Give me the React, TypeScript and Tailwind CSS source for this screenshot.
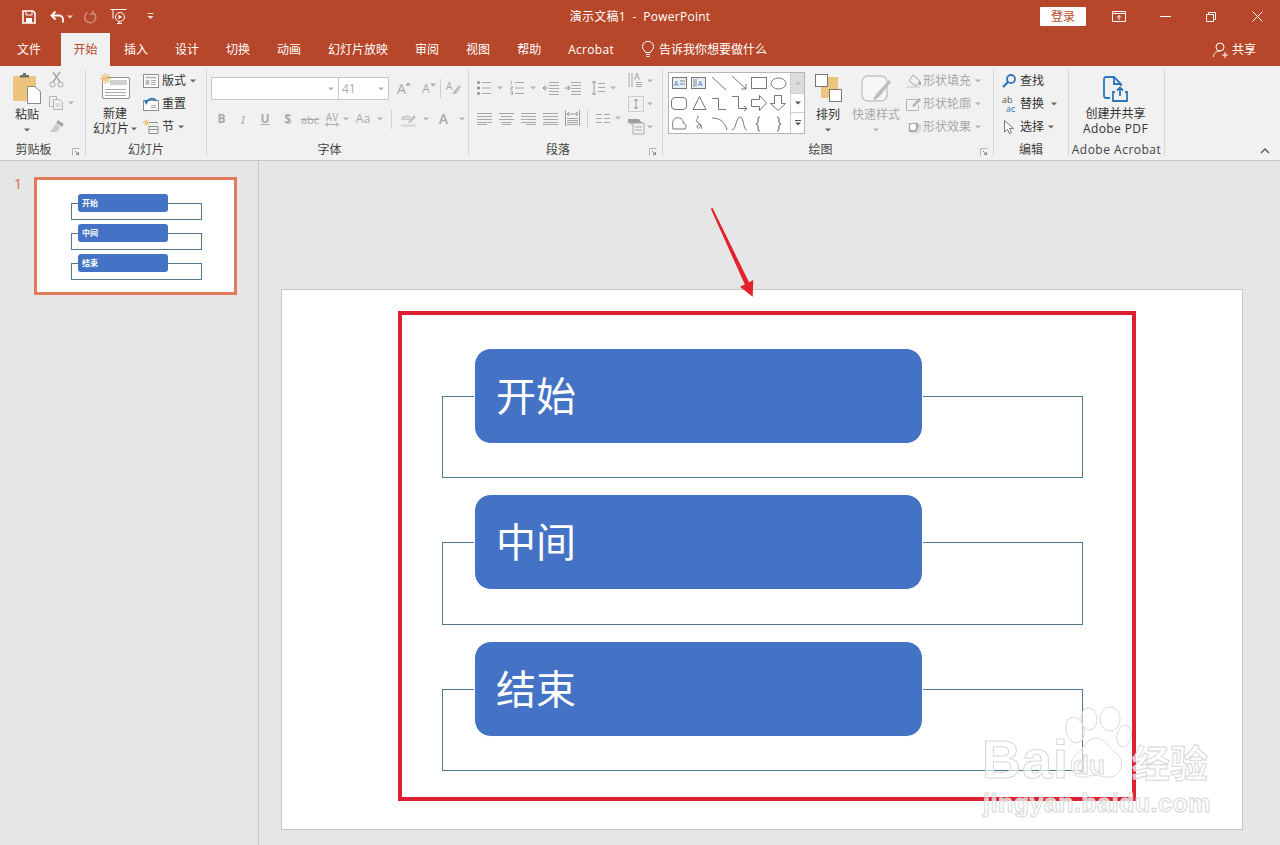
import React from "react";

const FONT = 'font-["Open_Sans","Noto_Sans_CJK_SC",sans-serif]';
const G = "#a9a9a9";

function Caret({ c = "#666", className = "" }: { c?: string; className?: string }) {
  return (
    <svg width="6" height="4" viewBox="0 0 6 4" className={`shrink-0 ${className}`}>
      <path d="M0 0.5h6L3 3.5z" fill={c} />
    </svg>
  );
}

function Ic({ w, h, children, className = "" }: { w: number; h: number; children: React.ReactNode; className?: string }) {
  return (
    <svg width={w} height={h} viewBox={`0 0 ${w} ${h}`} fill="none" className={`shrink-0 overflow-visible ${className}`}>
      {children}
    </svg>
  );
}

function Group({ w, label, launcher, children, labelClass = "" }: { w: number; label: string; launcher?: boolean; children: React.ReactNode; labelClass?: string }) {
  return (
    <div style={{ width: w }} className="relative mt-[4px] flex h-[86px] shrink-0 flex-col border-r border-[#d6d6d6]">
      <div className="h-[73px]">{children}</div>
      <div className={`flex h-[13px] items-center justify-center text-[12px] leading-none text-[#444] ${labelClass}`}>{label}</div>
      {launcher && (
        <svg width="8" height="8" viewBox="0 0 8 8" className="absolute bottom-[0px] right-[5px]">
          <path d="M0.5 7.5V0.5h7" stroke="#b5b5b5" fill="none" />
          <path d="M3 3l3.5 3.5M6.5 4v2.5H4" stroke="#888" fill="none" />
        </svg>
      )}
    </div>
  );
}

function Small({ icon, label, caret, disabled, gap = 4 }: { icon: React.ReactNode; label: string; caret?: boolean; disabled?: boolean; gap?: number }) {
  return (
    <div className="flex h-[23px] items-center">
      {icon}
      <span style={{ marginLeft: gap }} className={`whitespace-nowrap text-[12px] leading-none ${disabled ? "text-[#a8a8a8]" : "text-[#333]"}`}>{label}</span>
      {caret && <Caret c={disabled ? "#b5b5b5" : "#666"} className="ml-[4px]" />}
    </div>
  );
}

function Cell({ w = 22, children }: { w?: number; children: React.ReactNode }) {
  return <div style={{ width: w }} className="flex shrink-0 items-center justify-center">{children}</div>;
}

function Lines({ x = 1, w = 14, ys, c = G }: { x?: number; w?: number; ys: number[]; c?: string }) {
  return <path d={ys.map((y) => `M${x} ${y + 0.5}h${w}`).join("")} stroke={c} />;
}

function GreyLetter({ children, className = "" }: { children: React.ReactNode; className?: string }) {
  return <span className={`text-[12px] font-bold leading-none text-[#a9a9a9] ${className}`}>{children}</span>;
}

function TitleBar() {
  return (
    <div className="grid h-[33px] grid-cols-[1fr_auto_1fr] items-center text-white">
      <div className="flex items-center pl-[22px]">
        <Ic w={14} h={14}>
          <path d="M1 1h10l2 2v10H1z" stroke="#fff" strokeWidth="1.6" />
          <path d="M4 1.5v3.5h6V1.5" stroke="#fff" />
          <rect x="4" y="8" width="6" height="5" fill="#fff" />
        </Ic>
        <Ic w={15} h={14} className="ml-[14px]">
          <path d="M5.5 1.5L1.5 5.5l4 4" stroke="#fff" strokeWidth="1.8" />
          <path d="M2 5.5h7a4 4 0 0 1 4 4v3" stroke="#fff" strokeWidth="1.8" />
        </Ic>
        <Caret c="#f0d5cc" className="ml-[2px]" />
        <Ic w={14} h={14} className="ml-[10px]">
          <path d="M4.5 2.5A5.5 5.5 0 1 0 10 2.6M10 0.5v3.5H6.5" stroke="#cf8a73" strokeWidth="1.6" />
        </Ic>
        <Ic w={18} h={18} className="ml-[13px]">
          <path d="M0.5 1.5h16M3 1.5v9M7 15.5h5" stroke="#fff" strokeWidth="1" />
          <circle cx="10" cy="9" r="4.5" stroke="#fff" />
          <path d="M8.5 6.8v4.4L12.2 9z" fill="#fff" />
          <path d="M9 13.5v2" stroke="#fff" />
        </Ic>
        <svg width="7" height="7" viewBox="0 0 7 7" className="ml-[19px]">
          <path d="M0.5 0.5h6" stroke="#f3ddd5" />
          <path d="M0.5 3h6L3.5 6z" fill="#f3ddd5" />
        </svg>
      </div>
      <div className="whitespace-pre text-[12px] leading-none tracking-[0.25px]">演示文稿1  -  PowerPoint</div>
      <div className="flex items-center justify-end">
        <div className="mr-[10px] flex h-[19px] w-[46px] items-center justify-center rounded-[1px] bg-white text-[12px] leading-none text-[#b7472a]">登录</div>
        <Cell w={46}>
          <Ic w={14} h={12}>
            <path d="M0.5 0.5h13v10h-13zM0.5 2.5h13" stroke="#fff" />
            <path d="M7 9V4.5M5 6.5l2-2 2 2" stroke="#fff" />
          </Ic>
        </Cell>
        <Cell w={46}>
          <Ic w={11} h={3}><path d="M0 1.5h11" stroke="#fff" /></Ic>
        </Cell>
        <Cell w={46}>
          <Ic w={10} h={10}>
            <path d="M0.5 2.5h7v7h-7zM2.5 2.5v-2h7v7h-2" stroke="#fff" />
          </Ic>
        </Cell>
        <Cell w={46}>
          <Ic w={11} h={11}><path d="M0.5 0.5l10 10M10.5 0.5l-10 10" stroke="#fff" /></Ic>
        </Cell>
      </div>
    </div>
  );
}

function Tabs() {
  const tabs = ["插入", "设计", "切换", "动画", "幻灯片放映", "审阅", "视图", "帮助"];
  return (
    <div className="flex h-[33px] items-stretch pl-[5px] text-[12px] leading-none text-white">
      <div className="flex items-center px-[12px]">文件</div>
      <div className="ml-[8px] flex w-[49px] items-center justify-center bg-[#f1f1f1] text-[#b7472a]">开始</div>
      <div className="flex gap-[3px] pl-[2px]">
        {tabs.map((t) => (
          <div key={t} className="flex items-center px-[12px]">{t}</div>
        ))}
        <div className="ml-[12px] flex items-center tracking-[0.3px]">Acrobat</div>
      </div>
      <div className="ml-[27px] flex items-center">
        <Ic w={14} h={17}>
          <path d="M4.5 11.5C4 9.5 1.5 8.8 1.5 5.8a5.5 5.5 0 0 1 11 0c0 3-2.5 3.7-3 5.7zM5 13.5h4M5.5 15.5h3" stroke="#fff" />
        </Ic>
        <span className="ml-[4px]">告诉我你想要做什么</span>
      </div>
      <div className="ml-auto flex items-center pr-[24px]">
        <Ic w={15} h={16}>
          <circle cx="7" cy="5" r="4" stroke="#fff" />
          <path d="M0.5 15c0-3.5 2.5-6 6.5-6M9 13h6M12 10v6" stroke="#fff" />
        </Ic>
        <span className="ml-[4px]">共享</span>
      </div>
    </div>
  );
}

function Clipboard() {
  return (
    <Group w={86} label="剪贴板" launcher labelClass="pr-[18px]">
      <div className="flex pl-[13px] pt-[3px]">
        <div className="flex w-[28px] flex-col items-center">
          <Ic w={28} h={31}>
            <rect x="0" y="3" width="23" height="25" rx="1.5" fill="#ecc47e" />
            <path d="M7 4.5h9V2H13V0h-3v2H7z" fill="#6f6f6f" />
            <path d="M14.5 13.5h7l6 5v12h-13z" fill="#fff" stroke="#8a8a8a" />
          </Ic>
          <span className="mt-[4px] whitespace-nowrap text-[12px] leading-[14px] text-[#333]">粘贴</span>
          <Caret className="mt-[6px]" />
        </div>
        <div className="ml-[8px] flex flex-col">
          <Ic w={15} h={16} className="-mt-[1px]">
            <path d="M4 0l7 10M11 0L4 10" stroke="#a5a5a5" strokeWidth="1.4" />
            <circle cx="3.5" cy="12.5" r="2.5" stroke="#a5a5a5" />
            <circle cx="11.5" cy="12.5" r="2.5" stroke="#a5a5a5" />
          </Ic>
          <div className="mt-[8px] flex items-center">
            <Ic w={14} h={14}>
              <path d="M0.5 0.5h7v10h-7z" stroke="#b5b5b5" />
              <path d="M4.5 3.5h6l3 3v7h-9z" fill="#f1f1f1" stroke="#b5b5b5" />
              <path d="M6.5 8h5M6.5 10h5" stroke="#c5c5c5" />
            </Ic>
            <Caret c="#b5b5b5" className="ml-[5px]" />
          </div>
          <Ic w={16} h={14} className="mt-[9px]">
            <path d="M9 1l6 4-2 3-6-4z" fill="#a9a9a9" />
            <path d="M7 5l4 3-3 5-7 0z" fill="#c9c9c9" />
          </Ic>
        </div>
      </div>
    </Group>
  );
}

function Slides() {
  return (
    <Group w={121} label="幻灯片">
      <div className="flex">
        <div className="ml-[6px] flex w-[46px] flex-col items-center pt-[3px]">
          <Ic w={30} h={26}>
            <rect x="2.5" y="4.5" width="27" height="21" rx="1.5" fill="#fff" stroke="#8e8e8e" />
            <rect x="10" y="7" width="17" height="5" fill="#d0d0d0" />
            <path d="M5 16.5h21M5 19.5h21M5 22.5h21" stroke="#aaa" />
            <path d="M5.5 0v11M0 5.5h11M1.5 1.5l8 8M9.5 1.5l-8 8" stroke="#ecc47e" strokeWidth="1.5" />
          </Ic>
          <span className="mt-[7px] text-[12px] leading-[15px] text-[#333]">新建</span>
          <span className="flex items-center whitespace-nowrap text-[12px] leading-[15px] text-[#333]">幻灯片<Caret className="ml-[2px]" /></span>
        </div>
        <div className="ml-[5px] -mt-[1px] flex flex-col">
          <Small
            label="版式"
            caret
            gap={3}
            icon={
              <Ic w={16} h={14}>
                <rect x="0.5" y="0.5" width="15" height="13" fill="#fff" stroke="#8e8e8e" />
                <rect x="2.5" y="2.5" width="11" height="2" fill="#bdbdbd" />
                <rect x="2.5" y="6" width="4" height="5" fill="#bdbdbd" />
                <path d="M8 6.5h5M8 8.5h5M8 10.5h5" stroke="#aaa" />
              </Ic>
            }
          />
          <Small
            label="重置"
            gap={3}
            icon={
              <Ic w={16} h={14}>
                <rect x="0.5" y="3.5" width="15" height="10" fill="#fff" stroke="#8e8e8e" />
                <path d="M3 5.5c2-4 7-5 10-2" stroke="#2f78b9" strokeWidth="2" />
                <path d="M1 3l5 0-3 5z" fill="#2f78b9" />
                <path d="M8 8.5h5M8 10.5h5" stroke="#aaa" />
              </Ic>
            }
          />
          <Small
            label="节"
            caret
            gap={3}
            icon={
              <Ic w={16} h={15}>
                <path d="M3.5 0v7M0 3.5h7M1 1l5 5M6 1L1 6" stroke="#ecc47e" />
                <path d="M6 3.5h9M6 7.5h9v7H6zM6 10.5h9" stroke="#8e8e8e" />
              </Ic>
            }
          />
        </div>
      </div>
    </Group>
  );
}

function Font() {
  return (
    <Group w={262} label="字体" labelClass="pr-[16px]">
      <div className="pl-[4px] pt-[7px]">
        <div className="flex h-[23px] items-center">
          <div className="flex h-[23px] w-[128px] items-center justify-end border border-[#c6c6c6] bg-white pr-[4px]"><Caret c="#b5b5b5" /></div>
          <div className="flex h-[23px] w-[50px] items-center justify-between border border-l-0 border-[#c6c6c6] bg-white pl-[3px] pr-[4px]">
            <span className="text-[12px] leading-none text-[#a9a9a9]">41</span>
            <Caret c="#b5b5b5" />
          </div>
          <Cell w={25}>
            <span className="relative text-[14px] leading-none text-[#a9a9a9]">A
              <Caret c="#a9a9a9" className="absolute -right-[5px] top-0 rotate-180" />
            </span>
          </Cell>
          <Cell w={24}>
            <span className="relative text-[12px] leading-none text-[#a9a9a9]">A
              <Caret c="#a9a9a9" className="absolute -right-[6px] top-0" />
            </span>
          </Cell>
          <div className="ml-[2px] h-[19px] w-px bg-[#d0d0d0]" />
          <Cell w={25}>
            <div className="relative h-[15px] w-[15px]">
              <span className="absolute left-0 top-0 text-[10px] leading-none text-[#a9a9a9]">A</span>
              <Ic w={15} h={15} className="absolute left-0 top-0">
                <path d="M8 10l5-6 2 2-5 7H6z" fill="#c0c0c0" />
              </Ic>
            </div>
          </Cell>
        </div>
        <div className="mt-[8px] flex h-[22px] items-center">
          <Cell w={21}><GreyLetter>B</GreyLetter></Cell>
          <Cell w={22}><span className="font-['Liberation_Serif',serif] text-[13px] italic leading-none text-[#a9a9a9]">I</span></Cell>
          <Cell w={22}><GreyLetter className="underline">U</GreyLetter></Cell>
          <Cell w={23}><GreyLetter className="[text-shadow:1px_1px_1px_#ccc]">S</GreyLetter></Cell>
          <Cell w={22}><span className="text-[11px] leading-none text-[#a9a9a9] line-through">abc</span></Cell>
          <Cell w={22}>
            <span className="flex flex-col items-center text-[10px] leading-[10px] text-[#a9a9a9]">AV
              <Ic w={14} h={5}><path d="M0.5 2.5h13M3 0.5l-2.5 2 2.5 2M11 0.5l2.5 2-2.5 2" stroke="#a9a9a9" /></Ic>
            </span>
          </Cell>
          <Caret c="#b5b5b5" />
          <Cell w={28}><span className="text-[12px] leading-none text-[#a9a9a9]">Aa</span></Cell>
          <Caret c="#b5b5b5" />
          <div className="ml-[8px] h-[19px] w-px bg-[#d0d0d0]" />
          <Cell w={30}>
            <Ic w={16} h={15} className="ml-[3px]">
              <text x="0" y="8" fontSize="8" fill="#a9a9a9">ab</text>
              <path d="M7 10l6-7 2 2-6 6z" fill="#bdbdbd" />
              <rect x="0" y="12" width="15" height="3" fill="#dcdcdc" />
            </Ic>
          </Cell>
          <Caret c="#b5b5b5" className="ml-[1px]" />
          <Cell w={29}><span className="text-[14px] font-semibold leading-none text-[#a9a9a9]">A</span></Cell>
          <Caret c="#b5b5b5" className="ml-[1px]" />
        </div>
      </div>
    </Group>
  );
}

function Paragraph() {
  return (
    <Group w={194} label="段落" launcher labelClass="pr-[15px]">
      <div className="flex">
        <div className="w-[159px] pl-[8px] pt-[9px]">
          <div className="flex h-[18px] items-center">
            <Ic w={14} h={14}>
              <path d="M0 1.5h3M0 7h3M0 12.5h3" stroke="#999" strokeWidth="2.4" />
              <Lines x={5} w={9} ys={[1, 6.5, 12]} />
            </Ic>
            <Caret c="#b5b5b5" className="ml-[6px]" />
            <Ic w={14} h={14} className="ml-[7px]">
              <path d="M1.5 0v3.5M0.5 5.5h2v1.5h-2v1.5h2M0.5 10.5h2v1.5h-1 1v1.5h-2" stroke="#999" strokeWidth="0.7" />
              <Lines x={5} w={9} ys={[1, 6.5, 12]} />
            </Ic>
            <Caret c="#b5b5b5" className="ml-[6px]" />
            <Ic w={16} h={14} className="ml-[7px]">
              <Lines x={6} w={10} ys={[1, 4, 7, 10, 13]} />
              <path d="M5 7H0M2.5 4.5L0 7l2.5 2.5" stroke="#8e8e8e" />
            </Ic>
            <Ic w={16} h={14} className="ml-[6px]">
              <Lines x={6} w={10} ys={[1, 4, 7, 10, 13]} />
              <path d="M0 7h5M2.5 4.5L5 7 2.5 9.5" stroke="#8e8e8e" />
            </Ic>
            <Ic w={14} h={16} className="ml-[10px]">
              <path d="M3 1v14M1 3l2-2 2 2M1 13l2 2 2-2" stroke="#999" />
              <Lines x={7} w={7} ys={[3, 7, 11]} />
            </Ic>
            <Caret c="#b5b5b5" className="ml-[5px]" />
          </div>
          <div className="mt-[12px] flex h-[18px] items-center">
            <Ic w={15} h={13}><Lines ys={[1, 4, 7, 10]} w={15} x={0} /><Lines ys={[12]} w={10} x={0} /></Ic>
            <Ic w={15} h={13} className="ml-[7px]"><Lines ys={[1, 7]} w={15} x={0} /><Lines ys={[4, 10]} w={11} x={2} /><Lines ys={[12]} w={9} x={3} /></Ic>
            <Ic w={15} h={13} className="ml-[7px]"><Lines ys={[1, 4, 7, 10]} w={15} x={0} /><Lines ys={[12]} w={10} x={5} /></Ic>
            <Ic w={15} h={13} className="ml-[7px]"><Lines ys={[1, 4, 7, 10, 12]} w={15} x={0} /></Ic>
            <Ic w={15} h={16} className="ml-[7px]">
              <path d="M0.5 0v16M14.5 0v16" stroke="#999" />
              <path d="M2 4h11M4 2L2 4l2 2M11 2l2 2-2 2" stroke="#999" />
              <Lines x={2} w={11} ys={[8, 10, 12, 14]} />
            </Ic>
            <div className="ml-[7px] h-[19px] w-px bg-[#d0d0d0]" />
            <Ic w={14} h={10} className="ml-[8px]">
              <Lines ys={[1, 5, 9]} w={6} x={0} /><Lines ys={[1, 5, 9]} w={6} x={8} />
            </Ic>
            <Caret c="#b5b5b5" className="ml-[5px]" />
          </div>
        </div>
        <div className="-mt-[1px] flex flex-col">
          <div className="flex h-[23px] items-center">
            <div className="relative h-[17px] w-[15px]">
              <Ic w={15} h={17} className="absolute left-0 top-0">
                <path d="M1 1v14M4 1v14" stroke="#a9a9a9" />
                <Lines x={8} w={6} ys={[10, 12, 14]} />
              </Ic>
              <span className="absolute left-[6px] top-0 text-[9px] leading-none text-[#999]">A</span>
            </div>
            <Caret c="#b5b5b5" className="ml-[4px]" />
          </div>
          <div className="flex h-[23px] items-center">
            <Ic w={16} h={16}>
              <path d="M0.5 0.5h15v15h-15z" stroke="#bbb" strokeDasharray="2 1" />
              <path d="M8 3v10M6 5l2-2 2 2M6 11l2 2 2-2" stroke="#999" />
            </Ic>
            <Caret c="#b5b5b5" className="ml-[3px]" />
          </div>
          <div className="flex h-[23px] items-center">
            <Ic w={17} h={16}>
              <path d="M0 4V0h11l3 4z" fill="#a0a0a0" />
              <path d="M5 4h11v11H5zM7 8h7M7 11h7" stroke="#a9a9a9" />
              <path d="M1 4h4v3z" fill="#c0c0c0" />
            </Ic>
            <Caret c="#b5b5b5" className="ml-[2px]" />
          </div>
        </div>
      </div>
    </Group>
  );
}

function Gallery() {
  const s = "#777";
  return (
    <div className="mt-[2px] flex h-[62px] w-[137px] shrink-0 border border-[#b5b5b5] bg-white">
      <svg width="121" height="60" viewBox="9 7 121 60" fill="none" className="shrink-0">
        <rect x="12.5" y="11.5" width="14" height="11" fill="#e7eef6" stroke="#777" />
        <text x="14" y="20" fontSize="7" fill="#2f78b9">A</text>
        <path d="M20 15h5M20 18h5" stroke="#888" />
        <rect x="31.5" y="11.5" width="14" height="11" fill="#e7eef6" stroke="#777" />
        <text x="38" y="20" fontSize="7" fill="#2f78b9">A</text>
        <path d="M34 13v8M36 13v8" stroke="#888" />
        <path d="M52 11l14 13M72 10l14 13M86 18v5h-5" stroke={s} />
        <rect x="91.5" y="11.5" width="15" height="11" stroke={s} />
        <ellipse cx="118.5" cy="17.5" rx="7.5" ry="5.5" stroke={s} />
        <rect x="11.5" y="31.5" width="15" height="12" rx="3.5" stroke={s} />
        <path d="M33 43.5L39.5 30.5 46 43.5z" stroke={s} />
        <path d="M52 32.5h6.5v11H66M72 30.5h6.5v12H87M84 40l3 2.5-3 2.5" stroke={s} />
        <path d="M91.5 33.5h8v-4l7 7.5-7 7.5v-4h-8z" stroke={s} />
        <path d="M114.5 29.5h7v8h4l-7.5 7-7.5-7h4z" stroke={s} />
        <path d="M13 63h12c2-3 1-6-2-6 1-4-4-6-7-5-3 1-4 4-3 11z" stroke={s} />
        <path d="M37 50c4 1-3 4 0 6s5 2 3 5-4 0-2-2 5 2 3 4" stroke={s} />
        <path d="M52 52c8 0 13 4 15 12M72 64c4 0 4-13 8-13s3 13 7 13" stroke={s} />
        <path d="M100 51c-2 0-2 1-2 3v2c0 1-1 2-2 2 1 0 2 1 2 2v2c0 2 0 3 2 3M117 51c2 0 2 1 2 3v2c0 1 1 2 2 2-1 0-2 1-2 2v2c0 2 0 3-2 3" stroke="#555" />
      </svg>
      <div className="flex flex-1 flex-col border-l border-[#d0d0d0]">
        <div className="flex h-[20px] items-center justify-center bg-[#dcdcdc]"><Caret c="#bdbdbd" className="rotate-180" /></div>
        <div className="flex h-[20px] items-center justify-center border-y border-[#d0d0d0]"><Caret c="#555" /></div>
        <div className="flex flex-1 flex-col items-center justify-center gap-[1px]">
          <div className="h-px w-[6px] bg-[#555]" />
          <Caret c="#555" />
        </div>
      </div>
    </div>
  );
}

function Drawing() {
  return (
    <Group w={331} label="绘图" launcher labelClass="pr-[15px]">
      <div className="flex pl-[5px]">
        <Gallery />
        <div className="ml-[9px] flex w-[28px] shrink-0 flex-col items-center pt-[4px]">
          <Ic w={27} h={28}>
            <rect x="6" y="3" width="17" height="21" fill="#ecc47e" />
            <rect x="0.5" y="0.5" width="12" height="12" fill="#fff" stroke="#777" />
            <rect x="14.5" y="15.5" width="12" height="12" fill="#fff" stroke="#777" />
          </Ic>
          <span className="mt-[5px] whitespace-nowrap text-[12px] leading-[15px] text-[#333]">排列</span>
          <Caret className="mt-[6px]" />
        </div>
        <div className="ml-[10px] flex w-[48px] shrink-0 flex-col items-center pt-[5px]">
          <Ic w={30} h={29}>
            <rect x="1" y="1" width="25" height="25" rx="6" fill="#f6f6f6" stroke="#c5c5c5" strokeWidth="1.5" />
            <path d="M12 24l4-6 12-13 2 2-11 14-5 4z" fill="#bdbdbd" />
          </Ic>
          <span className="mt-[3px] whitespace-nowrap text-[12px] leading-[15px] text-[#a8a8a8]">快速样式</span>
          <Caret c="#b5b5b5" className="mt-[6px]" />
        </div>
        <div className="ml-[6px] -mt-[1px] flex flex-col">
          <Small disabled caret label="形状填充" gap={1} icon={
            <Ic w={16} h={14}><path d="M7 1l7 6-4 5-7-5z" stroke="#a9a9a9" /><rect x="0" y="12" width="14" height="2" fill="#dcdcdc" /><path d="M14 8v3" stroke="#a9a9a9" strokeWidth="2" /></Ic>
          } />
          <Small disabled caret label="形状轮廓" gap={1} icon={
            <Ic w={16} h={14}><path d="M0.5 2.5h12M0.5 2.5v11h12V8" stroke="#b5b5b5" /><path d="M6 9l7-8 2 2-7 7z" fill="#b0b0b0" /></Ic>
          } />
          <Small disabled caret label="形状效果" gap={1} icon={
            <Ic w={16} h={14}><ellipse cx="9" cy="8" rx="7" ry="6" fill="#dcdcdc" /><path d="M3 3h8l2 3-3 6H3z" fill="#a9a9a9" /><rect x="4" y="4" width="6" height="6" rx="2" fill="#fff" /></Ic>
          } />
        </div>
      </div>
    </Group>
  );
}

function Edit() {
  return (
    <Group w={75} label="编辑">
      <div className="-mt-[1px] flex flex-col pl-[8px]">
        <Small label="查找" gap={4} icon={
          <Ic w={14} h={14}>
            <circle cx="9" cy="5" r="4" stroke="#2f78b9" strokeWidth="1.8" />
            <path d="M6 8l-5 5" stroke="#2f78b9" strokeWidth="2.4" />
          </Ic>
        } />
        <div className="flex items-center">
          <Small label="替换" gap={3} icon={
            <div className="flex h-[18px] w-[15px] flex-col text-[9px] leading-[9px]">
              <span className="text-[#555]">ab</span>
              <span className="pl-[4px] text-[#2f78b9]">ac</span>
            </div>
          } />
          <Caret className="ml-[7px]" />
        </div>
        <div className="pl-[2px]">
          <Small label="选择" caret gap={6} icon={
            <Ic w={10} h={14}><path d="M0.5 0.5v11.5l3-2.5 2 4 2-1-2-4h4z" fill="#fff" stroke="#777" /></Ic>
          } />
        </div>
      </div>
    </Group>
  );
}

function AcrobatGroup() {
  return (
    <Group w={96} label="Adobe Acrobat" labelClass="tracking-[0.5px] whitespace-nowrap">
      <div className="flex flex-col items-center pr-[2px] pt-[6px]">
        <Ic w={25} h={27}>
          <path d="M7 22H3a2 2 0 0 1-2-2V3a2 2 0 0 1 2-2h8l7 7v2" stroke="#2a76bd" strokeWidth="1.8" />
          <path d="M11 1v7h7" stroke="#2a76bd" strokeWidth="1.8" />
          <path d="M12 16h-2v9h14v-9h-2" stroke="#2a76bd" strokeWidth="1.8" />
          <path d="M17 20v-8M14 14.5l3-3 3 3" stroke="#2a76bd" strokeWidth="1.8" />
        </Ic>
        <span className="mt-[3px] whitespace-nowrap text-[12px] leading-[15px] text-[#333]">创建并共享</span>
        <span className="whitespace-nowrap text-[12px] leading-[15px] tracking-[0.4px] text-[#333]">Adobe PDF</span>
      </div>
    </Group>
  );
}

function Ribbon() {
  return (
    <div className="relative flex h-[95px] border-b border-[#c6c6c6] bg-[#f1f1f1]">
      <Clipboard />
      <Slides />
      <Font />
      <Paragraph />
      <Drawing />
      <Edit />
      <AcrobatGroup />
      <svg width="10" height="6" viewBox="0 0 10 6" className="absolute bottom-[6px] right-[10px]">
        <path d="M1 5l4-4 4 4" stroke="#555" strokeWidth="1.3" fill="none" />
      </svg>
    </div>
  );
}

function ThumbRow({ label, h, gap }: { label: string; h: number; gap: number }) {
  return (
    <div style={{ marginBottom: gap, height: 9 + h }} className="relative">
      <div style={{ height: h }} className="absolute left-0 top-[9px] w-[131px] border border-[#51788c]" />
      <div className="relative ml-[7px] flex h-[18px] w-[90px] items-center rounded-[3px] bg-[#4472c4] pl-[4px] text-[8px] font-bold leading-none text-white">
        {label}
      </div>
    </div>
  );
}

function Thumbnail() {
  return (
    <div className="flex w-[259px] shrink-0 border-r border-[#c6c6c6] pl-[14px] pt-[16px]">
      <span className="w-[20px] text-[14px] leading-[14px] text-[#d0694c]">1</span>
      <div className="h-[118px] w-[203px] border-[3px] border-[#e07a5c] bg-white pl-[34px] pt-[14px]">
        <ThumbRow label="开始" h={17} gap={4} />
        <ThumbRow label="中间" h={17} gap={4} />
        <ThumbRow label="结束" h={17} gap={0} />
      </div>
    </div>
  );
}

function Row({ label, h, gap }: { label: string; h: number; gap: number }) {
  return (
    <div style={{ marginBottom: gap }} className="relative pt-[47px]">
      <div style={{ height: h }} className="w-[641px] border border-[#4f7a8f]" />
      <div className="absolute -top-[1px] left-[32px] flex h-[96px] w-[449px] items-center rounded-[17px] border border-white bg-[#4472c4] pl-[21px] text-[40px] leading-none text-white">
        {label}
      </div>
    </div>
  );
}

function Watermark() {
  const stroke = "[-webkit-text-stroke:1px_#d8d8d8]";
  return (
    <div className="pointer-events-none absolute left-[700px] top-[416px] h-[115px] w-[240px] font-['Liberation_Sans',sans-serif]">
      <svg width="74" height="76" viewBox="0 0 74 76" className="absolute left-[76px] top-[0px]" fill="rgba(255,255,255,0.55)" stroke="#dcdcdc" strokeWidth="1">
        <ellipse cx="17" cy="24" rx="9" ry="13" transform="rotate(-15 17 24)" />
        <ellipse cx="31" cy="13" rx="8" ry="11" transform="rotate(-5 31 13)" />
        <ellipse cx="52" cy="13" rx="10" ry="12" />
        <ellipse cx="66" cy="30" rx="7" ry="11" transform="rotate(10 66 30)" />
        <path d="M38 32c10 0 12 10 22 17 8 8 2 24-12 22-8-2-14-2-22 0-12 2-18-14-8-22 8-6 10-17 20-17z" />
      </svg>
      <span className={`absolute left-[0px] top-[26px] text-[54px] font-bold leading-none tracking-[1px] text-white/60 ${stroke}`}>Bai</span>
      <span className={`absolute left-[91px] top-[46px] text-[26px] font-bold leading-none text-white/60 ${stroke}`}>du</span>
      <span className={`absolute left-[150px] top-[36px] whitespace-nowrap font-["Noto_Sans_CJK_SC",sans-serif] text-[38px] font-bold leading-none text-white/70 ${stroke}`}>经验</span>
      <span className={`absolute left-[1px] top-[85px] whitespace-nowrap text-[25px] font-bold leading-none tracking-[0.5px] text-white/70 ${stroke}`}>jingyan.baidu.com</span>
    </div>
  );
}

function Canvas() {
  return (
    <div className="relative flex-1 pl-[22px] pt-[128px]">
      <div className="relative h-[541px] w-[962px] border border-[#c6c6c6] bg-white pl-[160px] pt-[59px]">
        <Row label="开始" h={82} gap={17} />
        <Row label="中间" h={83} gap={17} />
        <Row label="结束" h={82} gap={0} />
        <div className="absolute left-[116px] top-[21px] h-[490px] w-[738px] border-[4px] border-[#de2130]" />
        <Watermark />
      </div>
      <svg width="50" height="95" viewBox="0 0 50 95" className="absolute left-[449px] top-[44px]">
        <path d="M2.8 3.7L4.6 2.9 41 77.2 45.3 75 44.7 91.7 32 81.7 36.8 79.4z" fill="#e4202c" />
      </svg>
    </div>
  );
}

export default function App() {
  return (
    <div className={`h-[845px] w-[1280px] overflow-hidden bg-[#e6e6e6] ${FONT}`}>
      <div className="bg-[#b7472a]">
        <TitleBar />
        <Tabs />
      </div>
      <Ribbon />
      <div className="flex h-[684px]">
        <Thumbnail />
        <Canvas />
      </div>
    </div>
  );
}
